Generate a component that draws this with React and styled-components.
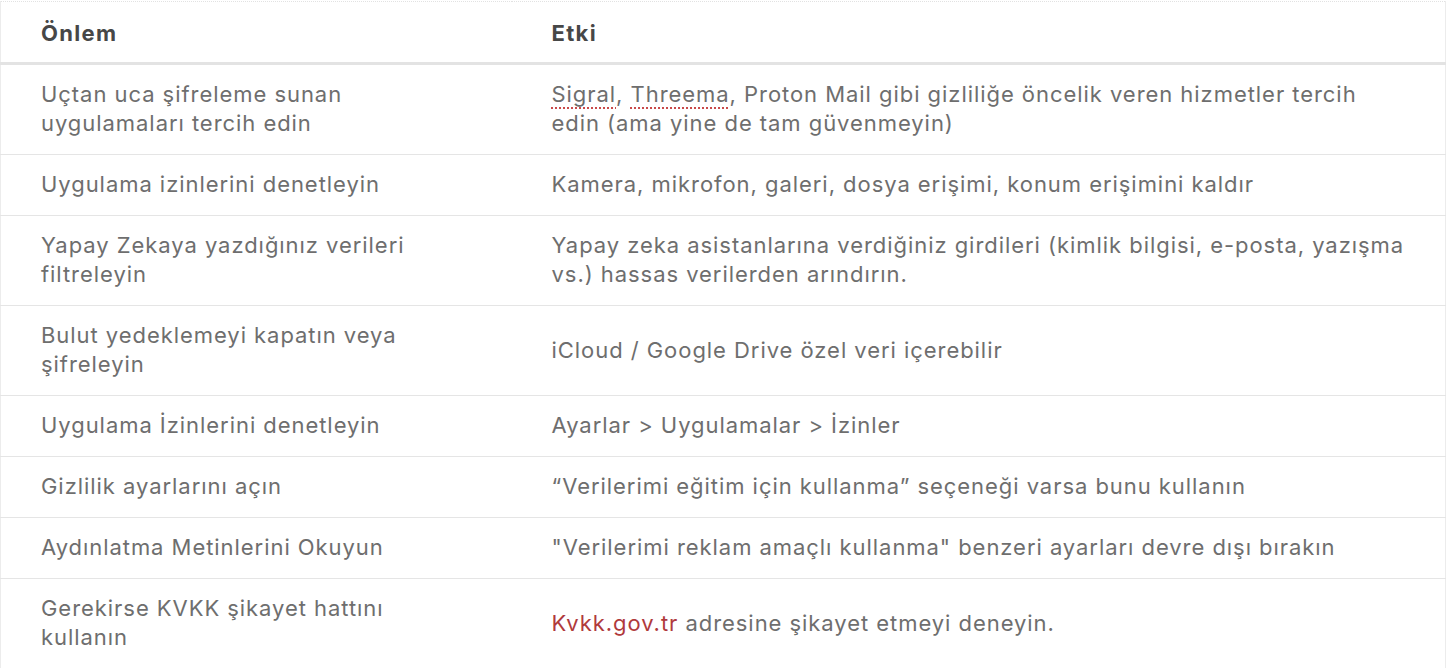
import styled, { createGlobalStyle } from "styled-components";

const GlobalStyle = createGlobalStyle`
  body {
    margin: 0;
    background: #ffffff;
    font-family: Inter, "Noto Sans", sans-serif;
  }
`;

const Wrapper = styled.div`
  width: 1446px;
  padding-top: 1px;
`;

const Table = styled.table`
  width: 100%;
  table-layout: fixed;
  border-collapse: collapse;
  border-top: 1px dotted #e2e2e2;
  border-left: 1px solid #ececec;
  border-right: 1px solid #ececec;
`;

const Th = styled.th`
  text-align: left;
  height: 62px;
  box-sizing: border-box;
  padding: 2px 40px 0;
  font-size: 22px;
  font-weight: 700;
  letter-spacing: 1.3px;
  color: #474747;
  border-bottom: 3px solid #e3e3e3;
  vertical-align: middle;
`;

const Row = styled.tr`
  border-bottom: 1px solid #e5e5e5;
`;

const Td = styled.td`
  padding: 15px 40px 16px;
  font-size: 22px;
  line-height: 29px;
  letter-spacing: 0.95px;
  color: #6e6e6e;
  vertical-align: middle;
`;

const Spell = styled.span`
  text-decoration: underline dotted #c94a4a;
  text-decoration-thickness: 2px;
  text-underline-offset: 5px;
`;

const Link = styled.a`
  color: #b03a3c;
  text-decoration: none;
`;

const rows = [
  {
    measure: "Uçtan uca şifreleme sunan uygulamaları tercih edin",
    effect: (
      <>
        <Spell>Sigral</Spell>, <Spell>Threema</Spell>, Proton Mail gibi
        gizliliğe öncelik veren hizmetler tercih edin (ama yine de tam
        güvenmeyin)
      </>
    ),
  },
  {
    measure: "Uygulama izinlerini denetleyin",
    effect: "Kamera, mikrofon, galeri, dosya erişimi, konum erişimini kaldır",
  },
  {
    measure: "Yapay Zekaya yazdığınız verileri filtreleyin",
    effect:
      "Yapay zeka asistanlarına verdiğiniz girdileri (kimlik bilgisi, e-posta, yazışma vs.) hassas verilerden arındırın.",
  },
  {
    measure: "Bulut yedeklemeyi kapatın veya şifreleyin",
    effect: "iCloud / Google Drive özel veri içerebilir",
  },
  {
    measure: "Uygulama İzinlerini denetleyin",
    effect: "Ayarlar > Uygulamalar > İzinler",
  },
  {
    measure: "Gizlilik ayarlarını açın",
    effect: "“Verilerimi eğitim için kullanma” seçeneği varsa bunu kullanın",
  },
  {
    measure: "Aydınlatma Metinlerini Okuyun",
    effect:
      "\"Verilerimi reklam amaçlı kullanma\" benzeri ayarları devre dışı bırakın",
  },
  {
    measure: "Gerekirse KVKK şikayet hattını kullanın",
    effect: (
      <>
        <Link href="#">Kvkk.gov.tr</Link> adresine şikayet etmeyi deneyin.
      </>
    ),
  },
];

const App = () => {
  return (
    <>
      <GlobalStyle />
      <Wrapper>
        <Table>
          <colgroup>
            <col style={{ width: "511px" }} />
            <col />
          </colgroup>
          <thead>
            <tr>
              <Th>Önlem</Th>
              <Th>Etki</Th>
            </tr>
          </thead>
          <tbody>
            {rows.map((row, i) => (
              <Row key={i}>
                <Td>{row.measure}</Td>
                <Td>{row.effect}</Td>
              </Row>
            ))}
          </tbody>
        </Table>
      </Wrapper>
    </>
  );
};

export default App;
